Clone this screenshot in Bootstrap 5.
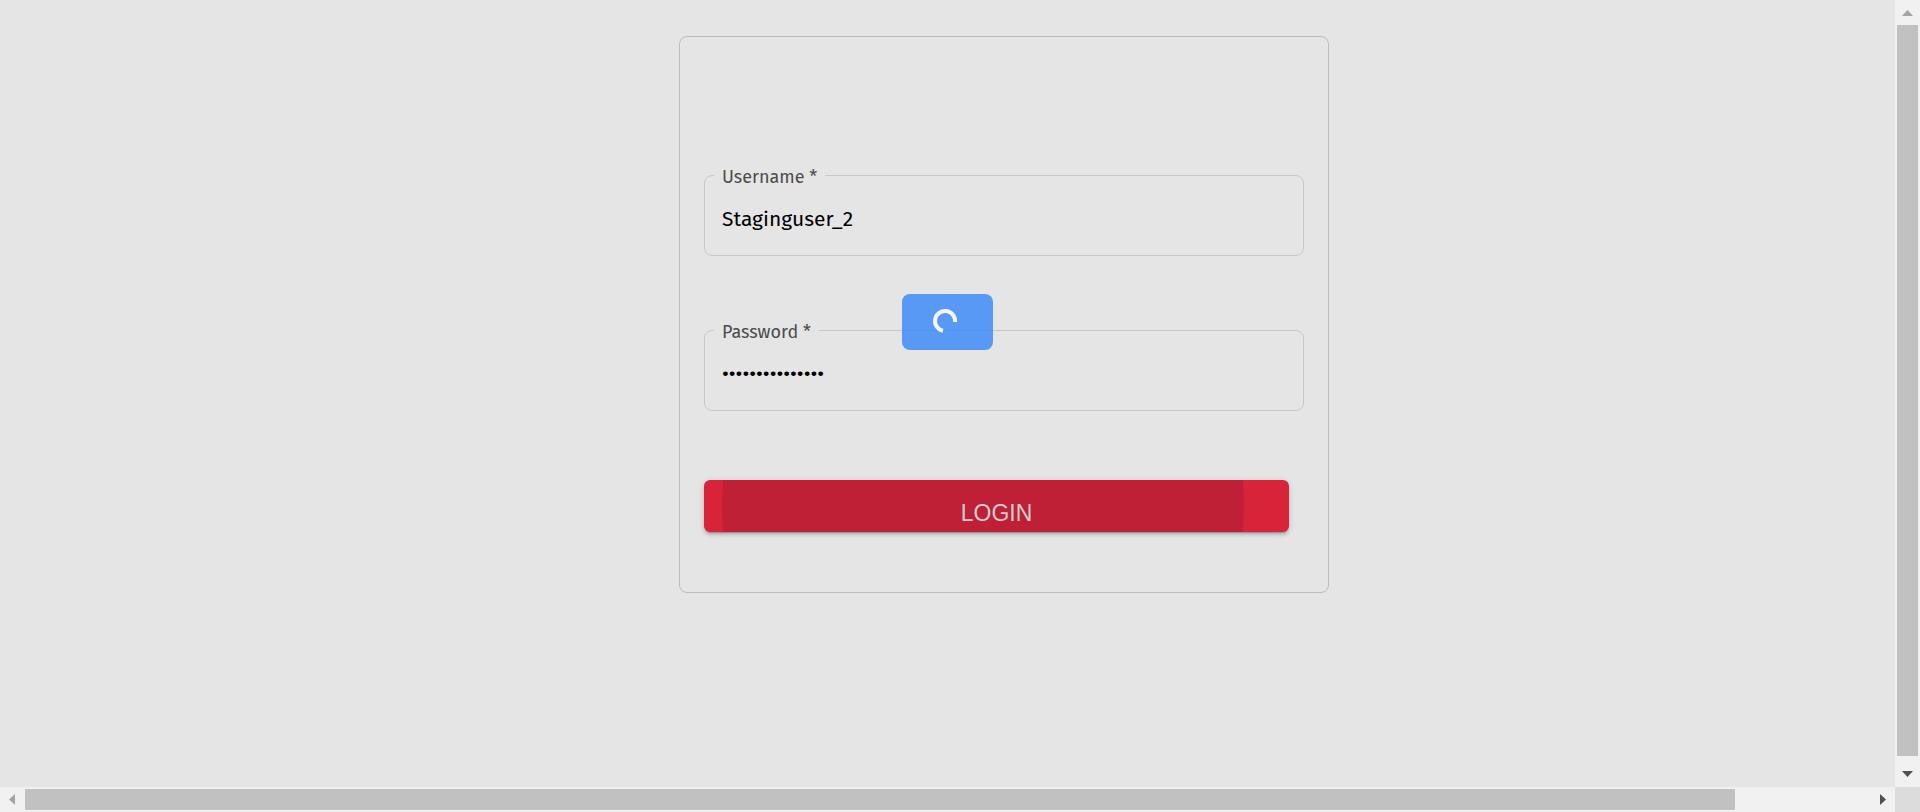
<!DOCTYPE html>
<html lang="en">
<head>
<meta charset="utf-8">
<meta name="viewport" content="width=device-width, initial-scale=1">
<title>Login</title>
<link href="https://cdn.jsdelivr.net/npm/bootstrap@5.3.0/dist/css/bootstrap.min.css" rel="stylesheet">
<style>
  body { background: #e5e5e5; font-family: "Fira Sans", "Noto Sans", sans-serif; }
  .app-shell { display: grid; grid-template: minmax(0, 1fr) 25px / minmax(0, 1fr) 25px; height: 100vh; }
  .view { padding: 36px 0 36px 113px; }
  .login-card { width: 100%; max-width: 650px; padding: 138px 24px 60px; border: 1px solid #bcbcbc; border-radius: 8px; }
  .field { margin-bottom: 74px; }
  .field label { position: absolute; top: -11px; left: 10px; padding: 0 8px; background: #e5e5e5; color: #4c4c4c; font-size: 18px; line-height: 26px; }
  .field .form-control { height: 81px; padding: 7px 17px 0; border: 1px solid #c8c8c8; border-radius: 8px; background: transparent; color: #000; font-size: 21px; }
  .login-btn { height: 52px; margin: -5px 15px 0 0; padding: 13px 0 0; border: 0; border-radius: 6px; background: #d72439; color: #d0cccd; font: 23px/40px "Liberation Sans", sans-serif; box-shadow: 0 4px 1px -3px rgba(0,0,0,.2), 0 3px 3px rgba(0,0,0,.14), 0 1px 7px rgba(0,0,0,.12); }
  .login-btn:hover { background: #d72439; color: #d0cccd; }
  .ripple { width: 522px; height: 522px; top: 50%; left: 279px; background: #bf2035; }
  .loading { top: 294px; width: 91px; height: 56px; padding: 0 5px 2px 0; border-radius: 8px; background: rgba(53,134,249,.8); }
  .bar { background: #f1f1f1; }
  .bar-btn { flex: 0 0 25px; }
  .thumb { background: #c1c1c1; }
  .bar-y .thumb { height: 99.2%; margin: 0 2px; }
  .bar-x .thumb { width: 92.7%; margin: 2px 0; }
  .corner { background: #dcdcdc; }
</style>
</head>
<body>
<div class="app-shell">
  <main class="view position-relative overflow-hidden d-flex justify-content-center align-items-start">
    <form class="login-card">
      <div class="field position-relative">
        <input class="form-control shadow-none" type="text" id="username" value="Staginguser_2" required>
        <label for="username">Username *</label>
      </div>
      <div class="field position-relative">
        <input class="form-control shadow-none" type="password" id="password" value="staginguser2pwd" autocomplete="off" required>
        <label for="password">Password *</label>
      </div>
      <div class="d-flex">
        <button class="login-btn btn flex-grow-1 position-relative overflow-hidden" type="button">
          <span class="ripple position-absolute translate-middle rounded-circle"></span>
          <span class="position-relative">LOGIN</span>
        </button>
      </div>
    </form>
    <div class="loading position-absolute start-0 end-0 mx-auto d-flex align-items-center justify-content-center" role="status" aria-label="Loading">
      <svg width="26" height="26" viewBox="0 0 26 26" fill="none" stroke="#f7f5f8" stroke-width="4"><path d="M23 14A10 10 0 1 0 11 22.800"/></svg>
    </div>
  </main>
  <div class="bar bar-y d-flex flex-column" aria-hidden="true">
    <svg class="bar-btn" width="25" height="25" fill="#a3a3a3"><path d="M7 16l5.500-6 5.500 6z"/></svg>
    <div class="flex-grow-1"><div class="thumb"></div></div>
    <svg class="bar-btn" width="25" height="25" fill="#505050"><path d="M7 9h11l-5.500 6z"/></svg>
  </div>
  <div class="bar bar-x d-flex" aria-hidden="true">
    <svg class="bar-btn" width="25" height="25" fill="#a3a3a3"><path d="M15 7v11l-6-5.500z"/></svg>
    <div class="flex-grow-1 d-flex"><div class="thumb"></div></div>
    <svg class="bar-btn" width="25" height="25" fill="#505050"><path d="M10 7v11l6-5.500z"/></svg>
  </div>
  <div class="corner" aria-hidden="true"></div>
</div>
<script src="https://cdn.jsdelivr.net/npm/bootstrap@5.3.0/dist/js/bootstrap.bundle.min.js"></script>
</body>
</html>
